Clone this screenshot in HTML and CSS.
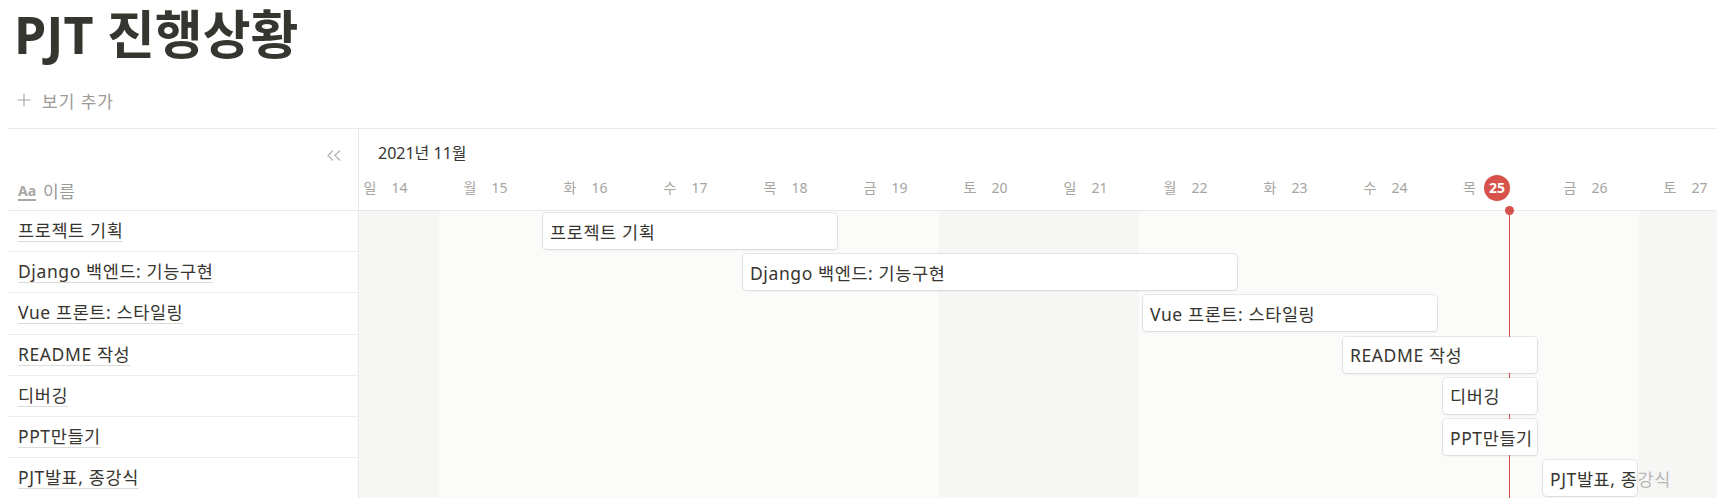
FILE: index.html
```html
<!DOCTYPE html>
<html lang="ko">
<head>
<meta charset="utf-8">
<title>PJT 진행상황</title>
<link rel="stylesheet" href="styles.css">
</head>
<body>
<div class="page">
  <h1 class="title">PJT 진행상황</h1>
  <div class="view-bar">
    <svg class="plus" width="14" height="14" viewBox="0 0 14 14"><path d="M7 0.5 V13.5 M0.5 7 H13.5" fill="none" stroke="#a9a8a5" stroke-width="1.2"/></svg>
    <span>보기 추가</span>
  </div>
  <div class="gantt">
    <div class="side">
      <div class="side-head">
        <div class="collapse">
          <svg width="16" height="13" viewBox="0 0 16 13"><path d="M7 1.5 L2 6.5 L7 11.5 M14 1.5 L9 6.5 L14 11.5" fill="none" stroke="#b8b7b4" stroke-width="1.4"/></svg>
        </div>
        <div class="prop"><span class="aa">Aa</span><span>이름</span></div>
      </div>
      <div class="row"><span class="name">프로젝트 기획</span></div>
      <div class="row"><span class="name">Django 백엔드: 기능구현</span></div>
      <div class="row"><span class="name">Vue 프론트: 스타일링</span></div>
      <div class="row"><span class="name">README 작성</span></div>
      <div class="row"><span class="name">디버깅</span></div>
      <div class="row"><span class="name">PPT만들기</span></div>
      <div class="row"><span class="name">PJT발표, 종강식</span></div>
    </div>
    <div class="timeline">
      <div class="tl-head">
        <div class="month">2021년 11월</div>
        <div class="days">
          <div class="day" style="left:-20px"><span class="dn">일</span><span class="dd">14</span></div>
          <div class="day" style="left:80px"><span class="dn">월</span><span class="dd">15</span></div>
          <div class="day" style="left:180px"><span class="dn">화</span><span class="dd">16</span></div>
          <div class="day" style="left:280px"><span class="dn">수</span><span class="dd">17</span></div>
          <div class="day" style="left:380px"><span class="dn">목</span><span class="dd">18</span></div>
          <div class="day" style="left:480px"><span class="dn">금</span><span class="dd">19</span></div>
          <div class="day" style="left:580px"><span class="dn">토</span><span class="dd">20</span></div>
          <div class="day" style="left:680px"><span class="dn">일</span><span class="dd">21</span></div>
          <div class="day" style="left:780px"><span class="dn">월</span><span class="dd">22</span></div>
          <div class="day" style="left:880px"><span class="dn">화</span><span class="dd">23</span></div>
          <div class="day" style="left:980px"><span class="dn">수</span><span class="dd">24</span></div>
          <div class="day today" style="left:1080px"><span class="dn">목</span><span class="dd">25</span></div>
          <div class="day" style="left:1180px"><span class="dn">금</span><span class="dd">26</span></div>
          <div class="day" style="left:1280px"><span class="dn">토</span><span class="dd">27</span></div>
        </div>
      </div>
      <div class="tl-body">
        <div class="weekend" style="left:-20px"></div>
        <div class="weekend" style="left:580px"></div>
        <div class="weekend" style="left:680px"></div>
        <div class="weekend" style="left:1280px"></div>
        <div class="now-line" style="left:1150px"></div>
        <div class="bar" style="left:184px;top:2px;width:294px">프로젝트 기획</div>
        <div class="bar" style="left:384px;top:43.2px;width:494px">Django 백엔드: 기능구현</div>
        <div class="bar" style="left:784px;top:84.4px;width:294px">Vue 프론트: 스타일링</div>
        <div class="bar" style="left:984px;top:125.6px;width:194px">README 작성</div>
        <div class="bar" style="left:1084px;top:166.8px;width:94px">디버깅</div>
        <div class="bar" style="left:1084px;top:208px;width:94px">PPT만들기</div>
        <div class="bar overflow" style="left:1184px;top:249.2px;width:94px">PJT발표, 종<span class="fade">강식</span></div>
      </div>
    </div>
  </div>
</div>
</body>
</html>
```
FILE: styles.css
```css
html, body {
  margin: 0;
  padding: 0;
  background: #ffffff;
  overflow: hidden;
}
body {
  width: 1717px;
  height: 498px;
  font-family: "Noto Sans", "Noto Sans CJK KR", sans-serif;
  color: #37352f;
}
.page {
  padding-left: 8px;
}
.title {
  margin: 0;
  padding: 2px 0 0 6px;
  font-size: 52px;
  line-height: 64px;
  font-weight: 700;
  color: #37352f;
}
.view-bar {
  display: flex;
  align-items: center;
  gap: 11px;
  height: 28px;
  margin-top: 20px;
  padding-left: 9px;
  font-size: 17px;
  letter-spacing: 1px;
  color: #9b9a97;
}
.gantt {
  display: flex;
  margin-top: 14px;
  border-top: 1px solid #e9e9e7;
  height: 369px;
  overflow: hidden;
}
.side {
  flex: 0 0 351px;
  box-sizing: border-box;
  border-right: 1px solid #e9e9e7;
  overflow: hidden;
}
.side-head {
  height: 81px;
  border-bottom: 1px solid #e9e9e7;
  display: flex;
  flex-direction: column;
  justify-content: space-between;
}
.collapse {
  display: flex;
  justify-content: flex-end;
  padding: 20px 16px 0 0;
}
.prop {
  display: flex;
  align-items: center;
  gap: 7px;
  padding: 0 0 9px 10px;
  font-size: 17px;
  letter-spacing: 0.6px;
  color: #9b9a97;
  height: 22px;
}
.aa {
  font-size: 14px;
  font-weight: 700;
  letter-spacing: 0;
  color: #a9a8a5;
  text-decoration: underline;
  text-underline-offset: 3px;
  text-decoration-thickness: 2px;
}
.row {
  height: 40.2px;
  border-bottom: 1px solid #ededeb;
  display: flex;
  align-items: center;
  padding-left: 10px;
}
.name {
  font-size: 17.5px;
  letter-spacing: 0.6px;
  line-height: 21px;
  border-bottom: 1px solid #dcdcda;
  color: #37352f;
}
.timeline {
  flex: 1;
  display: flex;
  flex-direction: column;
  overflow: hidden;
}
.tl-head {
  height: 81px;
  flex: 0 0 81px;
  border-bottom: 1px solid #e9e9e7;
  display: flex;
  flex-direction: column;
  background: #ffffff;
}
.month {
  padding: 13px 0 0 19px;
  font-size: 16px;
  line-height: 22px;
  color: #37352f;
}
.days {
  position: relative;
  flex: 1;
}
.day {
  position: absolute;
  top: 0;
  width: 100px;
  height: 47px;
  box-sizing: border-box;
  padding-right: 7px;
  display: flex;
  align-items: center;
  justify-content: center;
  gap: 15px;
  font-size: 14px;
  color: #a5a4a1;
}
.dn, .dd {
  line-height: 20px;
}
.day.today {
  padding-right: 5px;
}
.today .dd {
  width: 26px;
  height: 26px;
  border-radius: 50%;
  background: #d7524a;
  color: #ffffff;
  font-weight: 700;
  display: flex;
  align-items: center;
  justify-content: center;
  font-size: 14px;
  margin-left: -7px;
}
.tl-body {
  position: relative;
  flex: 1;
  background: #fbfbfa;
}
.weekend {
  position: absolute;
  top: 0;
  bottom: 0;
  width: 100px;
  background: #f6f6f5;
}
.now-line {
  position: absolute;
  top: 0;
  bottom: 0;
  width: 1px;
  background: #d7524a;
}
.now-line::before {
  content: "";
  position: absolute;
  top: -5px;
  left: -4px;
  width: 9px;
  height: 9px;
  border-radius: 50%;
  background: #d7524a;
}
.bar {
  position: absolute;
  height: 36px;
  box-sizing: border-box;
  background: #ffffff;
  border-radius: 4px;
  box-shadow: 0 0 0 1px rgba(15, 15, 15, 0.08), 0 1px 3px rgba(15, 15, 15, 0.08);
  display: flex;
  align-items: center;
  padding-left: 7px;
  font-size: 17.5px;
  letter-spacing: 0.6px;
  white-space: nowrap;
  overflow: hidden;
  color: #37352f;
}
.bar.overflow {
  overflow: visible;
}
.fade {
  color: #b9b8b5;
}
```
